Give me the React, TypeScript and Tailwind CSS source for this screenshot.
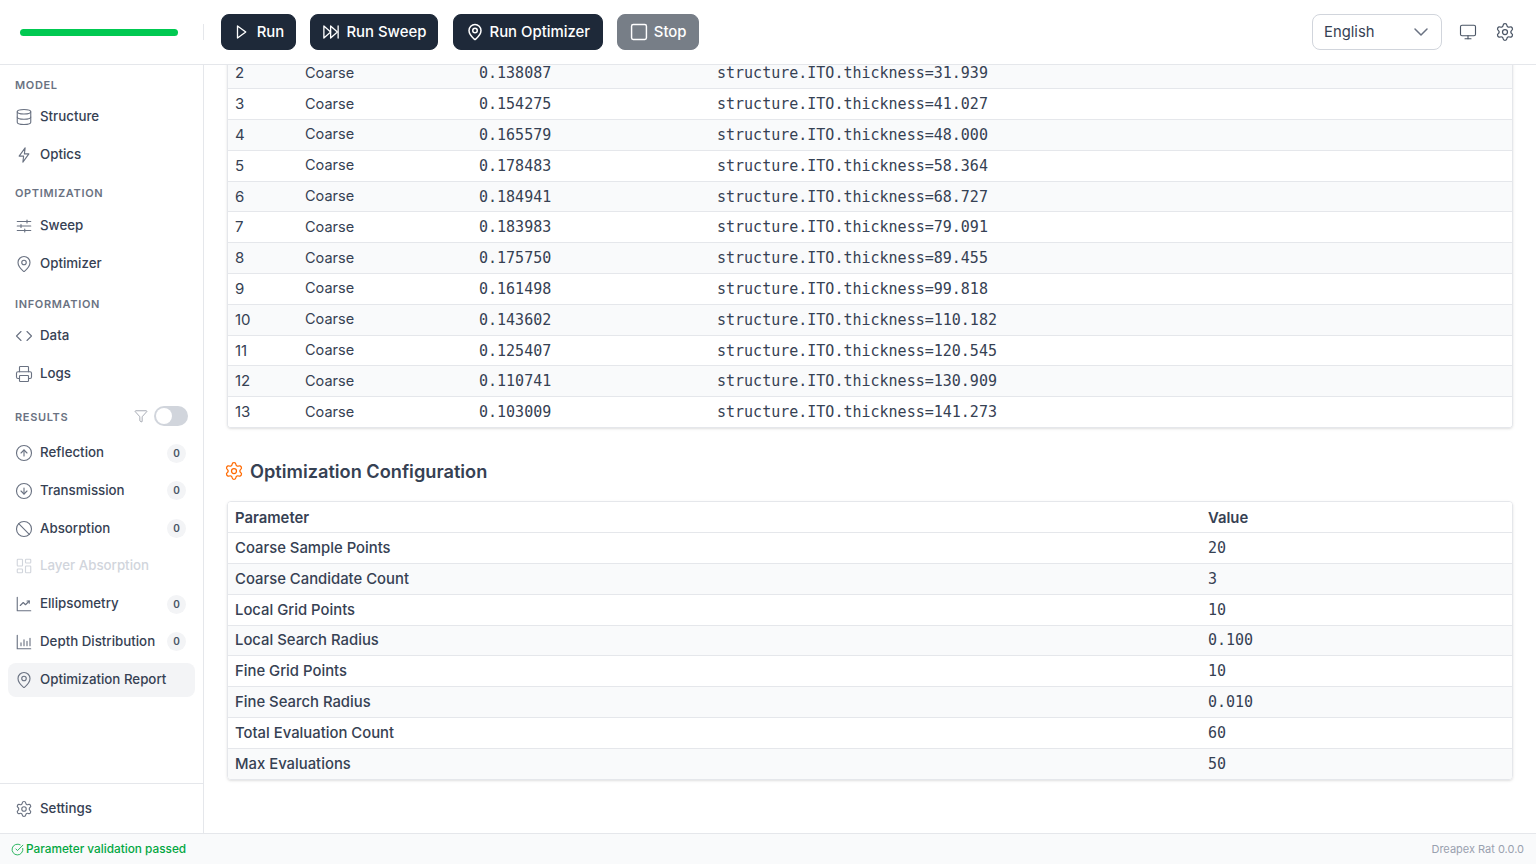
import { useState } from 'react'
import {
  Ban,
  ChevronDown,
  CircleArrowDown,
  CircleArrowUp,
  CircleCheckBig,
  Code,
  Database,
  Funnel,
  LayoutDashboard,
  MapPin,
  Monitor,
  Printer,
  Settings,
  Square,
} from 'lucide-react'

type IconProps = { className?: string }

function SweepIcon({ className }: IconProps) {
  return (
    <svg className={className} viewBox="0 0 24 24" fill="none" stroke="currentColor" strokeWidth="1.5" strokeLinecap="round">
      <path d="M3 6h18M3 12h18M3 18h18" />
      <path d="M16 4v4M8 10v4M13 16v4" />
    </svg>
  )
}

function PlayIcon({ className }: IconProps) {
  return (
    <svg className={className} viewBox="0 0 24 24" fill="none" stroke="currentColor" strokeWidth="1.75" strokeLinejoin="round">
      <path d="M6 4v16l11-8z" />
    </svg>
  )
}

function ZapIcon({ className }: IconProps) {
  return (
    <svg className={className} viewBox="0 0 24 24" fill="none" stroke="currentColor" strokeWidth="1.5" strokeLinejoin="round">
      <path d="M13.5 2.5 5.5 13.5h6l-1 8 8-11h-6z" />
    </svg>
  )
}

function SweepRunIcon({ className }: IconProps) {
  return (
    <svg className={className} viewBox="0 0 24 24" fill="none" stroke="currentColor" strokeWidth="1.75" strokeLinecap="round" strokeLinejoin="round">
      <path d="M2.5 4 11.5 12l-9 8z" />
      <path d="M11.5 4 20.5 12l-9 8z" />
      <path d="M21.5 4v16" />
    </svg>
  )
}

function EllipsometryIcon({ className }: IconProps) {
  return (
    <svg className={className} viewBox="0 0 24 24" fill="none" stroke="currentColor" strokeWidth="1.5" strokeLinecap="round" strokeLinejoin="round">
      <path d="M3 3v18h18" />
      <path d="m7 14 4-4 3 3 5-5" />
      <path d="M16 8h3v3" />
    </svg>
  )
}

function DepthIcon({ className }: IconProps) {
  return (
    <svg className={className} viewBox="0 0 24 24" fill="none" stroke="currentColor" strokeWidth="1.5" strokeLinecap="round">
      <path d="M3 3v18h18" />
      <path d="M8 17v-4M12 17V9M16 17v-6M20 17V7" />
    </svg>
  )
}

function StopIcon({ className }: IconProps) {
  return <Square strokeWidth={1.75} className={`${className} scale-110`} />
}

const coarseRows = [
  ['2', '0.138087', '31.939'],
  ['3', '0.154275', '41.027'],
  ['4', '0.165579', '48.000'],
  ['5', '0.178483', '58.364'],
  ['6', '0.184941', '68.727'],
  ['7', '0.183983', '79.091'],
  ['8', '0.175750', '89.455'],
  ['9', '0.161498', '99.818'],
  ['10', '0.143602', '110.182'],
  ['11', '0.125407', '120.545'],
  ['12', '0.110741', '130.909'],
  ['13', '0.103009', '141.273'],
]

const configRows = [
  ['Coarse Sample Points', '20'],
  ['Coarse Candidate Count', '3'],
  ['Local Grid Points', '10'],
  ['Local Search Radius', '0.100'],
  ['Fine Grid Points', '10'],
  ['Fine Search Radius', '0.010'],
  ['Total Evaluation Count', '60'],
  ['Max Evaluations', '50'],
]

function NavItem({
  icon: Icon,
  label,
  count,
  active,
  disabled,
}: {
  icon: React.ComponentType<IconProps & { strokeWidth?: number }>
  label: string
  count?: number
  active?: boolean
  disabled?: boolean
}) {
  return (
    <div
      className={`flex h-[34px] items-center gap-[7px] rounded-lg pr-[9px] pl-[7px] text-[13.3px] font-medium ${
        active ? 'bg-gray-100 text-gray-700' : disabled ? 'text-gray-300' : 'text-gray-700'
      }`}
    >
      <Icon strokeWidth={1.5} className={`h-[18px] w-[18px] shrink-0 ${disabled ? 'text-gray-300' : 'text-gray-500'}`} />
      <span className="flex-1 truncate">{label}</span>
      {count !== undefined && (
        <span className="flex h-[19px] w-[19px] items-center justify-center rounded-full bg-gray-100 text-[10px] font-semibold text-gray-600">
          {count}
        </span>
      )}
    </div>
  )
}

function SectionLabel({ children }: { children: React.ReactNode }) {
  return <div className="px-[7px] text-[11px] leading-4 font-semibold tracking-[0.06em] text-gray-500 uppercase">{children}</div>
}

function RunButton({
  icon: Icon,
  label,
  width,
  muted,
}: {
  icon: React.ComponentType<IconProps>
  label: string
  width: string
  muted?: boolean
}) {
  return (
    <button className={`flex h-9 items-center justify-center gap-1.5 rounded-lg border border-gray-800 bg-gray-800 text-[14.9px] font-medium text-white ${width} ${muted ? 'opacity-60' : ''}`}>
      <Icon className="h-[18px] w-[18px]" />
      {label}
    </button>
  )
}

export default function App() {
  const [filterOn, setFilterOn] = useState(false)

  return (
    <div className="flex h-screen flex-col overflow-hidden bg-white font-['Inter',sans-serif] text-gray-700">
      <header className="flex h-[65px] shrink-0 items-center border-b border-gray-200">
        <div className="flex w-[204px] shrink-0 items-center pl-5">
          <div className="h-[7px] w-[158px] rounded-full bg-green-500" />
          <div className="ml-auto h-4 w-px bg-gray-200" />
        </div>
        <div className="ml-[17px] flex flex-1 items-center gap-[14.4px]">
          <RunButton icon={PlayIcon} label="Run" width="w-[75px]" />
          <RunButton icon={SweepRunIcon} label="Run Sweep" width="w-[128px]" />
          <RunButton icon={MapPin} label="Run Optimizer" width="w-[150px]" />
          <RunButton icon={StopIcon} label="Stop" width="w-[82px]" muted />
        </div>
        <div className="flex h-9 w-[130px] items-center justify-between rounded-lg border border-gray-300 pr-2 pl-[11px] text-[14.8px]">
          English
          <ChevronDown strokeWidth={1.5} className="h-6 w-6 text-gray-500" />
        </div>
        <Monitor strokeWidth={1.5} className="ml-[17px] h-[18px] w-[18px] text-gray-600" />
        <Settings strokeWidth={1.5} className="mr-[21px] ml-[18px] h-5 w-5 text-gray-600" />
      </header>

      <div className="flex min-h-0 flex-1">
        <aside className="flex w-[204px] shrink-0 flex-col border-r border-gray-200">
          <nav className="flex flex-1 flex-col px-2 pt-3">
            <SectionLabel>Model</SectionLabel>
            <div className="mt-[7px] flex flex-col gap-1">
              <NavItem icon={Database} label="Structure" />
              <NavItem icon={ZapIcon} label="Optics" />
            </div>
            <div className="mt-[13px]">
              <SectionLabel>Optimization</SectionLabel>
            </div>
            <div className="mt-2 flex flex-col gap-1">
              <NavItem icon={SweepIcon} label="Sweep" />
              <NavItem icon={MapPin} label="Optimizer" />
            </div>
            <div className="mt-[15px]">
              <SectionLabel>Information</SectionLabel>
            </div>
            <div className="mt-[7px] flex flex-col gap-1">
              <NavItem icon={Code} label="Data" />
              <NavItem icon={Printer} label="Logs" />
            </div>
            <div className="mt-4 flex h-5 items-center justify-between pr-[7px]">
              <SectionLabel>Results</SectionLabel>
              <div className="-mt-0.5 flex items-center gap-1.5">
                <Funnel strokeWidth={1} className="h-[14px] w-[14px] text-gray-500" />
                <button
                  onClick={() => setFilterOn(!filterOn)}
                  className="flex h-5 w-[34px] items-center rounded-full bg-gray-300 px-0.5"
                >
                  <span className="h-4 w-4 rounded-full bg-white" />
                </button>
              </div>
            </div>
            <div className="mt-[9px] flex flex-col gap-[3.8px]">
              <NavItem icon={CircleArrowUp} label="Reflection" count={0} />
              <NavItem icon={CircleArrowDown} label="Transmission" count={0} />
              <NavItem icon={Ban} label="Absorption" count={0} />
              <NavItem icon={LayoutDashboard} label="Layer Absorption" disabled />
              <NavItem icon={EllipsometryIcon} label="Ellipsometry" count={0} />
              <NavItem icon={DepthIcon} label="Depth Distribution" count={0} />
              <NavItem icon={MapPin} label="Optimization Report" active />
            </div>
          </nav>
          <div className="h-[50px] border-t border-gray-200 px-2 pt-2">
            <NavItem icon={Settings} label="Settings" />
          </div>
        </aside>

        <main className="min-w-0 flex-1 overflow-hidden px-[23px]">
          <div className="-mt-[7px] overflow-hidden rounded-b border border-t-0 border-gray-200 shadow-sm">
            <table className="w-full border-collapse text-[14.5px] leading-[14px]">
              <colgroup>
                <col className="w-[70px]" />
                <col className="w-[173px]" />
                <col className="w-[238px]" />
                <col />
              </colgroup>
              <tbody>
                {coarseRows.map(([id, score, thickness], i) => (
                  <tr key={id} className={`h-[30.8px] border-b border-gray-200 last:h-[30px] last:border-b-0 ${i % 2 === 0 ? 'bg-gray-50' : 'bg-white'}`}>
                    <td className="py-0 pl-[7px] text-[15px]">{id}</td>
                    <td className="pt-0 pb-px pl-[7px]">Coarse</td>
                    <td className="py-0 pl-2 font-['DejaVu_Sans_Mono',monospace] text-[15px]">{score}</td>
                    <td className="py-0 pl-2 font-['DejaVu_Sans_Mono',monospace] text-[15px]">structure.ITO.thickness={thickness}</td>
                  </tr>
                ))}
              </tbody>
            </table>
          </div>

          <h2 className="mt-[29px] flex items-center gap-1.5 text-[18.2px] leading-7 font-semibold text-gray-700">
            <Settings strokeWidth={1.5} className="-ml-[3px] h-5 w-5 text-orange-500" />
            Optimization Configuration
          </h2>

          <div className="mt-4 overflow-hidden rounded border border-gray-200 shadow-sm">
            <table className="w-full border-collapse text-[14.85px]">
              <colgroup>
                <col className="w-[973px]" />
                <col />
              </colgroup>
              <thead>
                <tr className="h-[31px] border-b border-gray-200 bg-white">
                  <th className="pt-0.5 pb-0 pl-[7px] text-left font-semibold">Parameter</th>
                  <th className="pt-0.5 pb-0 pl-[7px] text-left font-semibold">Value</th>
                </tr>
              </thead>
              <tbody>
                {configRows.map(([name, value], i) => (
                  <tr key={name} className={`h-[30.8px] border-b border-gray-200 last:border-b-0 ${i % 2 === 0 ? 'bg-white' : 'bg-gray-50'}`}>
                    <td className="py-0 pl-[7px] font-medium">{name}</td>
                    <td className="py-0 pl-[7px] font-['DejaVu_Sans_Mono',monospace] text-[15px]">{value}</td>
                  </tr>
                ))}
              </tbody>
            </table>
          </div>
        </main>
      </div>

      <footer className="flex h-[31px] shrink-0 items-center justify-between border-t border-gray-200 bg-gray-50 pr-3 pl-[11px] text-[11.8px]">
        <div className="flex items-center gap-0.5 pt-px font-medium text-green-600">
          <CircleCheckBig strokeWidth={1.5} className="h-[13px] w-[13px]" />
          Parameter validation passed
        </div>
        <span className="text-[11px] text-gray-400">Dreapex Rat 0.0.0</span>
      </footer>
    </div>
  )
}
